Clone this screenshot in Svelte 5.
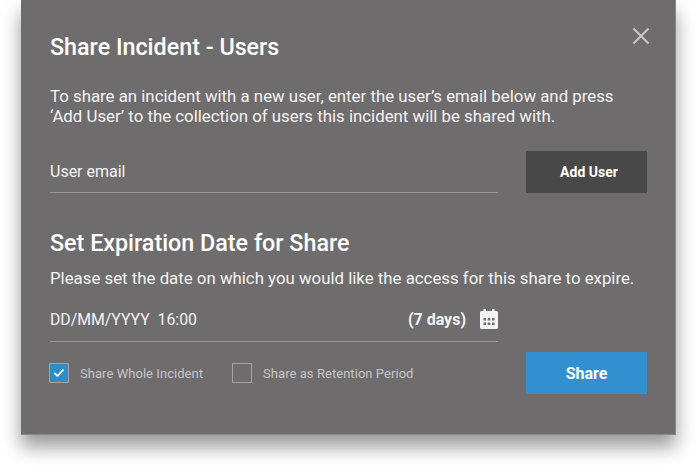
<script lang="ts">
  let wholeIncident = $state(true);
  let retention = $state(false);
</script>

<div class="page">
  <section class="dialog" aria-label="Share Incident">
    <button class="dialog__close" aria-label="Close">
      <svg width="18" height="18" viewBox="0 0 18 18" fill="none" stroke="currentColor" stroke-width="2">
        <path d="M1.500 1.500 16.500 16.500M16.500 1.500 1.500 16.500" />
      </svg>
    </button>

    <h1 class="dialog__title">Share Incident - Users</h1>
    <p class="dialog__intro">
      To share an incident with a new user, enter the user’s email below and press<br />
      ‘Add User’ to the collection of users this incident will be shared with.
    </p>

    <div class="row row--email">
      <div class="field field--email">User email</div>
      <button class="btn btn--dark">Add User</button>
    </div>

    <h2 class="dialog__subtitle">Set Expiration Date for Share</h2>
    <p class="dialog__hint">Please set the date on which you would like the access for this share to expire.</p>

    <div class="field field--date">
      <span class="field__date">DD/MM/YYYY&nbsp;&nbsp;16:00</span>
      <span class="field__days">(7 days)</span>
      <svg class="field__icon" width="18" height="20" viewBox="0 0 18 20" fill="currentColor">
        <path fill-rule="evenodd" d="M3.500 0h2.500v2h6V0h2.500v2h2A1.500 1.500 0 0 1 18 3.500V18.500A1.500 1.500 0 0 1 16.500 20H1.500A1.500 1.500 0 0 1 0 18.500V3.500A1.500 1.500 0 0 1 1.500 2h2ZM3.500 9v2.500H6V9Zm4.250 0v2.500h2.500V9ZM12 9v2.500h2.500V9ZM3.500 13.500V16H6v-2.500Zm4.250 0V16h2.500v-2.500ZM12 13.500V16h2.500v-2.500Z" />
      </svg>
    </div>

    <div class="row row--actions">
      <label class="check">
        <input type="checkbox" bind:checked={wholeIncident} />
        <span class="check__box">
          <svg width="12" height="10" viewBox="0 0 12 10" fill="none" stroke="#fff" stroke-width="1.8">
            <path d="M1.500 5 4.500 8 10.500 1.500" />
          </svg>
        </span>
        Share Whole Incident
      </label>
      <label class="check">
        <input type="checkbox" bind:checked={retention} />
        <span class="check__box">
          <svg width="12" height="10" viewBox="0 0 12 10" fill="none" stroke="#fff" stroke-width="1.8">
            <path d="M1.500 5 4.500 8 10.500 1.500" />
          </svg>
        </span>
        Share as Retention Period
      </label>
      <button class="btn btn--primary">Share</button>
    </div>
  </section>
</div>

<style>
  :global(body) {
    background: #fff;
    font-family: Roboto, "Liberation Sans", sans-serif;
  }

  .page {
    width: 700px;
    height: 465px;
    padding-left: 21px;
    box-sizing: border-box;
    overflow: hidden;
  }

  .dialog {
    position: relative;
    box-sizing: border-box;
    width: 655px;
    height: 435px;
    padding: 33px 28px 0 29px;
    background: #6f6c6d;
    color: #fff;
    border-bottom: 1px solid #8b8889;
    border-right: 1px solid #8b8889;
    box-shadow: 0 12px 18px rgba(0, 0, 0, 0.4);
  }

  .dialog__close {
    position: absolute;
    top: 27px;
    right: 25px;
    padding: 0;
    border: 0;
    background: none;
    color: #c9c7c8;
    line-height: 0;
  }

  .dialog__title {
    margin: 0;
    font-size: 23.3px;
    line-height: 28px;
    font-weight: 500;
  }

  .dialog__intro {
    margin: 25px 0 0;
    font-size: 16.82px;
    line-height: 20px;
    color: #f4f3f3;
  }

  .row {
    display: flex;
    align-items: center;
  }

  .row--email {
    justify-content: space-between;
    margin-top: 24px;
  }

  .field {
    box-sizing: border-box;
    width: 448px;
    border-bottom: 1px solid #9a9899;
    font-size: 16px;
    color: #f4f3f3;
  }

  .field--email {
    height: 43px;
    padding-top: 12px;
  }

  .btn {
    width: 121px;
    height: 42px;
    border: 0;
    color: #fff;
    font-family: inherit;
    font-weight: 700;
  }

  .btn--dark {
    padding: 0 0 0 5px;
    background: #484848;
    font-size: 14px;
  }

  .btn--primary {
    margin-left: auto;
    background: #3390d0;
    font-size: 16px;
  }

  .dialog__subtitle {
    margin: 36px 0 0;
    font-size: 23.3px;
    line-height: 28px;
    font-weight: 500;
  }

  .dialog__hint {
    margin: 11px 0 0;
    font-size: 16.82px;
    line-height: 20px;
    color: #f4f3f3;
  }

  .field--date {
    display: flex;
    align-items: center;
    height: 43px;
    margin-top: 11px;
    padding-bottom: 1px;
  }

  .field__date {
    font-size: 15.8px;
  }

  .field__days {
    margin-left: auto;
    font-weight: 700;
  }

  .field__icon {
    margin: -2px 0 0 14px;
    color: #f4f3f3;
  }

  .row--actions {
    margin-top: 10px;
  }

  .check {
    display: flex;
    align-items: center;
    margin-right: 29px;
    font-size: 13px;
    letter-spacing: 0.05px;
    color: #c6c4c5;
  }

  .check:first-child {
    margin-left: -1px;
  }

  .check input {
    position: absolute;
    opacity: 0;
  }

  .check__box {
    box-sizing: border-box;
    display: flex;
    align-items: center;
    justify-content: center;
    width: 20px;
    height: 20px;
    margin-right: 11px;
    border: 1px solid #a5a3a4;
  }

  .check__box svg {
    visibility: hidden;
  }

  .check input:checked + .check__box {
    background: #2f8dc4;
  }

  .check input:checked + .check__box svg {
    visibility: visible;
  }
</style>
